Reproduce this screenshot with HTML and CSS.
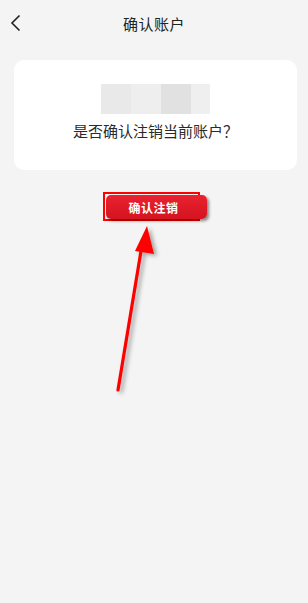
FILE: index.html
```html
<!DOCTYPE html>
<html lang="zh">
  <head>
    <meta charset="UTF-8">
    <meta name="viewport" content="width=device-width, initial-scale=1.0">
    <title>确认账户</title>
    <link rel="stylesheet" href="styles.css">
  </head>
  <body>
    <div class="header">
      <svg class="back" width="12" height="18" viewBox="0 0 12 18">
        <polyline points="9.5,1.5 2,9 9.5,16.5" fill="none" stroke="#222" stroke-width="1.6"/>
      </svg>
      <div class="title">确认账户</div>
    </div>

    <div class="card">
      <div class="masked">
        <span class="m1"></span><span class="m2"></span><span class="m3"></span><span class="m4"></span>
      </div>
      <div class="question">是否确认注销当前账户？</div>
    </div>

    <div class="btn-row">
      <div class="btn-frame">
        <div class="btn">确认注销</div>
      </div>
    </div>

    <!-- annotation arrow -->
    <svg class="pointer" width="308" height="603" viewBox="0 0 308 603">
      <defs>
        <filter id="sh" x="-50%" y="-50%" width="200%" height="200%">
          <feDropShadow dx="3" dy="2" stdDeviation="2" flood-color="#000" flood-opacity="0.35"/>
        </filter>
      </defs>
      <g filter="url(#sh)">
        <line x1="118" y1="390" x2="142" y2="245" stroke="#ff0000" stroke-width="3.2" stroke-linecap="round"/>
        <polygon points="147,226 154,254 135,251" fill="#ff0000"/>
      </g>
    </svg>
  </body>
</html>
```

FILE: styles.css
```css
body {
  margin: 0;
  background-color: #f4f4f4;
  font-family: "Noto Sans CJK SC", "Noto Sans", sans-serif;
  width: 308px;
  height: 603px;
  position: relative;
  overflow: hidden;
}

.header {
  height: 46px;
  display: flex;
  align-items: center;
  justify-content: center;
  position: relative;
}

.header .back {
  position: absolute;
  left: 10px;
  top: 14px;
}

.title {
  font-size: 15px;
  color: #222;
  letter-spacing: 0.5px;
}

.card {
  margin: 14px 11px 0 14px;
  height: 110px;
  background: #fff;
  border-radius: 10px;
  display: flex;
  flex-direction: column;
  align-items: center;
  padding-top: 24px;
  box-sizing: border-box;
}

.masked {
  display: flex;
  height: 30px;
}

.masked span {
  display: block;
  width: 30px;
  height: 30px;
}
.masked .m1 { background: #e9e9e9; }
.masked .m2 { background: #eeeeee; }
.masked .m3 { background: #e1e1e1; }
.masked .m4 { background: #efefef; width: 19px; }

.question {
  margin-top: 6px;
  font-size: 15px;
  color: #2a2a2a;
}

.btn-row {
  display: flex;
  padding-left: 103px;
  margin-top: 22px;
}

.btn-frame {
  width: 97px;
  height: 29px;
  border: 2px solid #ff0000;
  box-sizing: border-box;
  position: relative;
}

.btn {
  position: absolute;
  left: 1px;
  top: 1px;
  width: 101px;
  height: 24px;
  border-radius: 5px;
  background: linear-gradient(#ea2130, #d4141f);
  box-shadow: 2px 2px 3px rgba(0, 0, 0, 0.45);
  color: #fff;
  font-size: 12px;
  font-weight: bold;
  display: flex;
  align-items: center;
  justify-content: center;
  letter-spacing: 0.5px;
  padding-right: 6px;
  box-sizing: border-box;
}

.pointer {
  position: absolute;
  left: 0;
  top: 0;
  pointer-events: none;
}
```
